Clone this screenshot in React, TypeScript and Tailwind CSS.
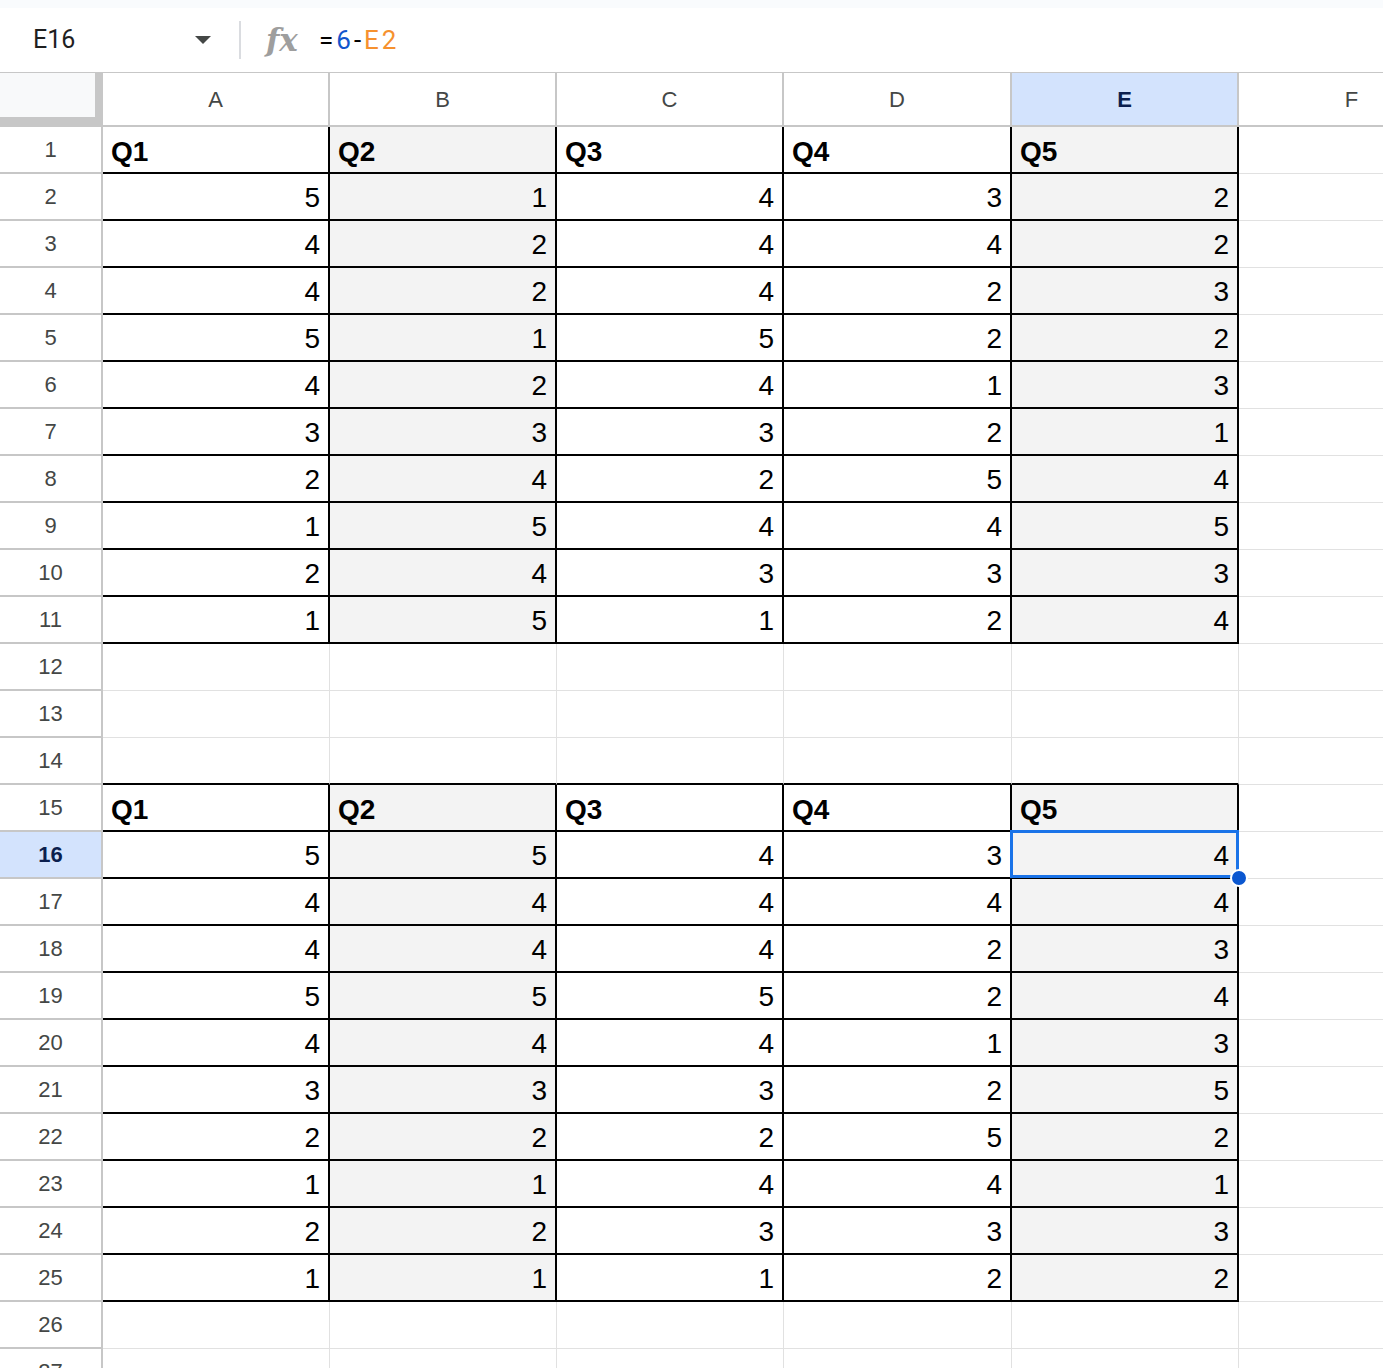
import React from "react";

const font = { fontFamily: '"Liberation Sans", Arial, sans-serif' };

const table1 = [
	[5, 1, 4, 3, 2],
	[4, 2, 4, 4, 2],
	[4, 2, 4, 2, 3],
	[5, 1, 5, 2, 2],
	[4, 2, 4, 1, 3],
	[3, 3, 3, 2, 1],
	[2, 4, 2, 5, 4],
	[1, 5, 4, 4, 5],
	[2, 4, 3, 3, 3],
	[1, 5, 1, 2, 4],
];

const table2 = [
	[5, 5, 4, 3, 4],
	[4, 4, 4, 4, 4],
	[4, 4, 4, 2, 3],
	[5, 5, 5, 2, 4],
	[4, 4, 4, 1, 3],
	[3, 3, 3, 2, 5],
	[2, 2, 2, 5, 2],
	[1, 1, 4, 4, 1],
	[2, 2, 3, 3, 3],
	[1, 1, 1, 2, 2],
];

const headers = ["Q1", "Q2", "Q3", "Q4", "Q5"];
const columns = ["A", "B", "C", "D", "E", "F"];

type Row =
	| { kind: "header" }
	| { kind: "data"; values: number[] }
	| { kind: "empty" };

// rows 1..27
const rows: Row[] = [
	{ kind: "header" },
	...table1.map((values) => ({ kind: "data" as const, values })),
	{ kind: "empty" },
	{ kind: "empty" },
	{ kind: "empty" },
	{ kind: "header" },
	...table2.map((values) => ({ kind: "data" as const, values })),
	{ kind: "empty" },
	{ kind: "empty" },
];

function FormulaBar() {
	return (
		<div className="bg-[#f9fbfd] pt-[8px]">
			<div className="flex h-[65px] items-center bg-white border-b border-[#c7c7c7]">
				<div className="flex w-[239px] items-center pl-[33px] pr-[28px]">
					<span
						className="flex-1 text-[25px] text-[#1f1f1f]"
						style={{ fontFamily: 'Roboto, "Liberation Sans", sans-serif' }}
					>
						E16
					</span>
					<span className="h-0 w-0 border-x-[8px] border-t-[8px] border-x-transparent border-t-[#444746]" />
				</div>
				<div className="h-[38px] w-[2px] bg-[#dadce0]" />
				<span
					className="ml-[25px] w-[32px] text-[31px] font-bold italic text-[#9e9e9e]"
					style={{ fontFamily: '"DejaVu Serif", "Liberation Serif", serif' }}
				>
					fx
				</span>
				<span
					className="ml-[21px] text-[26px] tracking-[3px]"
					style={{ fontFamily: 'Roboto, "Liberation Sans", sans-serif' }}
				>
					<span className="text-black">=</span>
					<span className="text-[#1155cc]">6</span>
					<span className="text-black">-</span>
					<span className="text-[#f6912e]">E2</span>
				</span>
			</div>
		</div>
	);
}

function ColumnHeaders() {
	return (
		<>
			<div className="h-[54px] bg-[#f8f9fa] border-r-[8px] border-b-[10px] border-[#c7c7c7]" />
			{columns.map((c) => (
				<div
					key={c}
					className={
						c === "E"
							? "flex h-[54px] items-center justify-center bg-[#d3e3fd] border-r-2 border-b-2 border-[#c7c7c7] text-[22px] font-bold text-[#0b1f4e]"
							: "flex h-[54px] items-center justify-center bg-white border-r-2 border-b-2 border-[#c7c7c7] text-[22px] text-[#444746]"
					}
				>
					{c}
				</div>
			))}
		</>
	);
}

function cellClass(opts: { table: boolean; blackBottom: boolean; gray: boolean }) {
	if (opts.table) {
		return opts.gray
			? "relative flex h-[47px] items-center px-[8px] bg-[#f3f3f3] border-r-2 border-b-2 border-black"
			: "relative flex h-[47px] items-center px-[8px] bg-white border-r-2 border-b-2 border-black";
	}
	if (opts.blackBottom) {
		return "relative flex h-[47px] items-center px-[8px] bg-white border-r border-r-[#e1e1e1] border-b-2 border-b-black";
	}
	return "relative flex h-[47px] items-center px-[8px] bg-white border-r border-b border-[#e1e1e1]";
}

export default function App() {
	return (
		<div className="h-[1368px] w-[1383px] overflow-hidden bg-white" style={font}>
			<FormulaBar />
			<div className="grid grid-cols-[103px_227px_227px_227px_228px_227px_227px]">
				<ColumnHeaders />
				{rows.map((row, i) => {
					const num = i + 1;
					const next = rows[i + 1];
					const blackBottom = !!next && next.kind === "header";
					const isTable = row.kind !== "empty";
					return (
						<React.Fragment key={num}>
							<div
								className={
									num === 16
										? "flex h-[47px] items-center justify-center bg-[#d3e3fd] border-r-2 border-b-2 border-[#c7c7c7] text-[22px] font-bold text-[#0b1f4e]"
										: "flex h-[47px] items-center justify-center bg-white border-r-2 border-b-2 border-[#c7c7c7] text-[22px] text-[#444746]"
								}
							>
								{num}
							</div>
							{[0, 1, 2, 3, 4].map((c) => (
								<div
									key={c}
									className={cellClass({
										table: isTable,
										blackBottom,
										gray: c === 1 || c === 4,
									})}
								>
									{row.kind === "header" && (
										<span className="pt-[4px] text-[28px] leading-[32px] font-bold text-black">
											{headers[c]}
										</span>
									)}
									{row.kind === "data" && (
										<span className="ml-auto pt-[3px] text-[28px] leading-[32px] text-black">
											{row.values[c]}
										</span>
									)}
									{num === 16 && c === 4 && (
										<div className="absolute left-[-2px] top-[-2px] z-10 h-[48px] w-[229px] border-[3px] border-[#1a73e8]">
											<div className="absolute bottom-[-12px] right-[-12px] h-[18px] w-[18px] rounded-full border-2 border-white bg-[#0b57d0]" />
										</div>
									)}
								</div>
							))}
							<div className="h-[47px] bg-white border-b border-[#e1e1e1]" />
						</React.Fragment>
					);
				})}
			</div>
		</div>
	);
}
